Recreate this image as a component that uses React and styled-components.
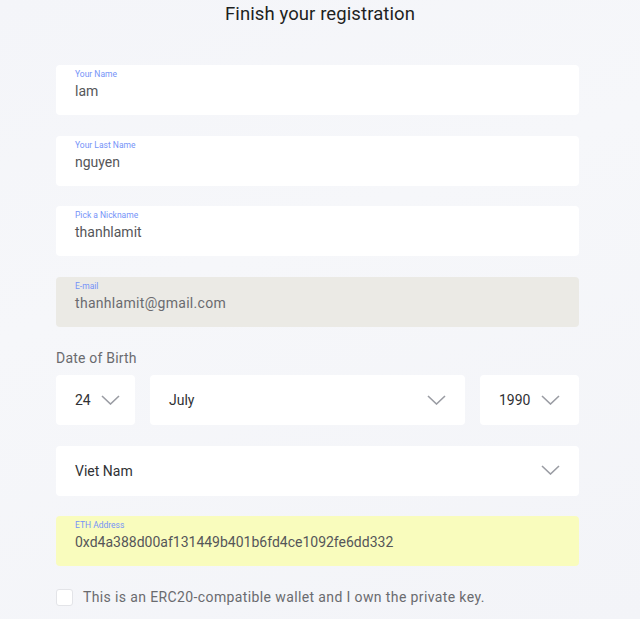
import React from "react";
import styled, { createGlobalStyle } from "styled-components";

const GlobalStyle = createGlobalStyle`
  html, body {
    margin: 0;
    padding: 0;
    background: #f4f5f9;
    font-family: Roboto, "Liberation Sans", sans-serif;
  }
`;

const Chevron = () => (
  <svg width="19" height="10" viewBox="0 0 19 10" fill="none">
    <path d="M1 1l8.5 8 8.5-8" stroke="#9a9ca3" strokeWidth="1.6" />
  </svg>
);

const Field = ({ label, value, tone }) => (
  <FieldBox $tone={tone}>
    <FieldLabel>{label}</FieldLabel>
    <FieldValue $wide={tone === "disabled"}>{value}</FieldValue>
  </FieldBox>
);

const Select = ({ value, width, grow }) => (
  <SelectBox $width={width} $grow={grow}>
    <span>{value}</span>
    <Chevron />
  </SelectBox>
);

const App = () => (
  <>
    <GlobalStyle />
    <Page>
      <Title>Finish your registration</Title>
      <Form>
        <Field label="Your Name" value="lam" />
        <Field label="Your Last Name" value="nguyen" />
        <Field label="Pick a Nickname" value="thanhlamit" />
        <Field label="E-mail" value="thanhlamit@gmail.com" tone="disabled" />
        <DateBlock>
          <SectionLabel>Date of Birth</SectionLabel>
          <DateRow>
            <Select value="24" width="79px" />
            <Select value="July" grow />
            <Select value="1990" width="99px" />
          </DateRow>
        </DateBlock>
        <Select value="Viet Nam" grow />
        <Field
          label="ETH Address"
          value="0xd4a388d00af131449b401b6fd4ce1092fe6dd332"
          tone="highlight"
        />
        <CheckRow>
          <CheckBox />
          <CheckText>
            This is an ERC20-compatible wallet and I own the private key.
          </CheckText>
        </CheckRow>
      </Form>
    </Page>
  </>
);

const Page = styled.div`
  width: 640px;
  height: 619px;
  overflow: hidden;
  background: linear-gradient(160deg, #f4f5f9 0%, #f6f7fa 40%, #f3f4f8 100%);
`;

const Title = styled.h1`
  margin: 0;
  padding-top: 3px;
  text-align: center;
  font-size: 18.5px;
  font-weight: 400;
  color: #1e1f22;
  letter-spacing: 0.1px;
`;

const Form = styled.div`
  width: 523px;
  margin: 40px 0 0 56px;
  display: flex;
  flex-direction: column;
  gap: 20.5px;
  > * {
    flex-shrink: 0;
  }
`;

const FieldBox = styled.div`
  height: 50px;
  box-sizing: border-box;
  padding: 4px 19px 0;
  border-radius: 4px;
  background: ${({ $tone }) =>
    $tone === "disabled" ? "#ebeae5" : $tone === "highlight" ? "#f9fcbd" : "#ffffff"};
`;

const FieldLabel = styled.div`
  font-size: 8.5px;
  line-height: 11px;
  color: #7593f8;
`;

const FieldValue = styled.div`
  margin-top: 2px;
  font-size: 14px;
  line-height: 18px;
  color: ${({ $wide }) => ($wide ? "#6a6b6f" : "#555659")};
  letter-spacing: ${({ $wide }) => ($wide ? "0.3px" : "0")};
`;

const DateBlock = styled.div`
  display: flex;
  flex-direction: column;
  gap: 8px;
  margin-top: 2px;
`;

const SectionLabel = styled.div`
  font-size: 14px;
  line-height: 18px;
  color: #6a6b6f;
  letter-spacing: 0.2px;
`;

const DateRow = styled.div`
  display: flex;
  gap: 15px;
`;

const SelectBox = styled.div`
  height: 50px;
  box-sizing: border-box;
  width: ${({ $width }) => $width || "auto"};
  flex: ${({ $grow }) => ($grow ? "1 0 auto" : "none")};
  padding: 0 19px;
  display: flex;
  align-items: center;
  justify-content: space-between;
  gap: 10px;
  border-radius: 4px;
  background: #ffffff;
  font-size: 14px;
  color: #303134;
  svg {
    flex: none;
    margin-top: -1px;
  }
`;

const CheckRow = styled.div`
  display: flex;
  align-items: center;
  gap: 10px;
  margin-top: 2px;
`;

const CheckBox = styled.div`
  width: 17px;
  height: 17px;
  box-sizing: border-box;
  border: 1px solid #e3e4e8;
  border-radius: 3px;
  background: #ffffff;
`;

const CheckText = styled.div`
  font-size: 14px;
  color: #6a6b6f;
  letter-spacing: 0.38px;
`;

export default App;
